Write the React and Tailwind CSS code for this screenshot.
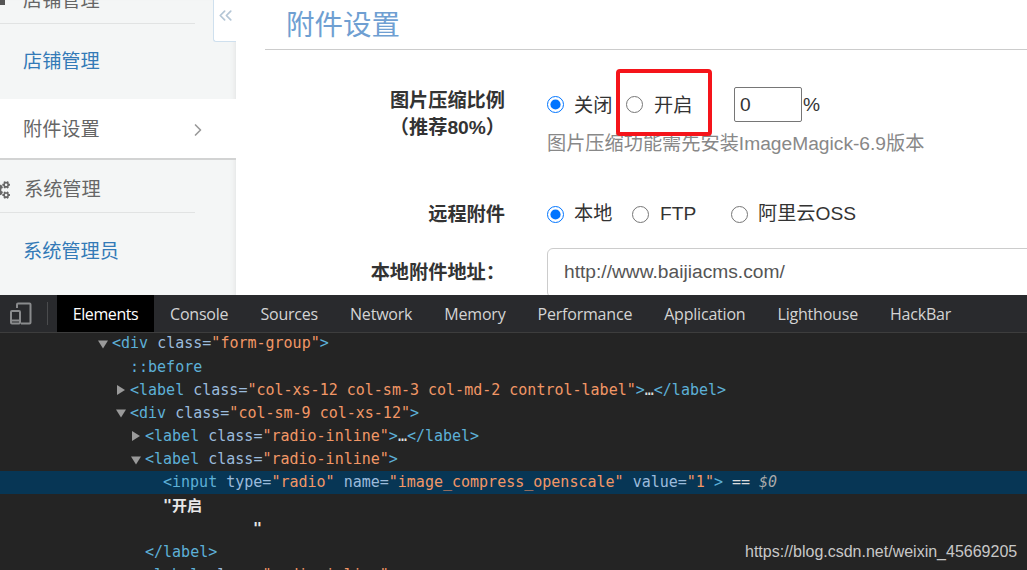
import { ChevronRight, ChevronsLeft } from 'lucide-react';
import { FaCogs } from 'react-icons/fa';

const cjk = { fontFamily: '"Liberation Sans", "Noto Sans CJK SC", sans-serif' };
const tabs = ['Console', 'Sources', 'Network', 'Memory', 'Performance', 'Application', 'Lighthouse', 'HackBar'];

function Radio({ checked, className = '' }) {
  return (
    <input
      type="radio"
      checked={checked}
      readOnly
      className={`m-0 h-[17px] w-[17px] shrink-0 accent-[#0075ff] ${className}`}
    />
  );
}

function Arrow({ open }) {
  return (
    <svg width="10" height="10" viewBox="0 0 10 10" className="shrink-0">
      <path d={open ? 'M0 1.5H10L5 9.5Z' : 'M1 0V10L9 5Z'} fill="#9a9a9a" />
    </svg>
  );
}

function Tag({ name, attrs = [], tail, close }) {
  return (
    <span className="whitespace-pre text-[#5db0d7]">
      {'<'}{close && '/'}{name}
      {attrs.map(([k, v]) => (
        <span key={k}>
          {' '}<span className="text-[#9bbbdc]">{k}</span><span className="text-[#9bbbdc]">=</span>
          <span className="text-[#f29766]">"{v}"</span>
        </span>
      ))}
      {'>'}
      {tail}
    </span>
  );
}

function Line({ indent, arrow, selected, children }) {
  return (
    <div className={`flex h-[23.2px] items-center ${selected ? 'bg-[#073655]' : ''}`}>
      <div className="flex shrink-0 items-center justify-end pr-[4px]" style={{ width: indent }}>
        {arrow && <Arrow open={arrow === 'open'} />}
      </div>
      {children}
    </div>
  );
}

function Sidebar() {
  return (
    <aside className="relative flex h-full w-[236px] shrink-0 flex-col bg-[#f4f6f6] text-[19.2px] shadow-[inset_-5px_0_5px_-4px_#e2e3e3]" style={cjk}>
      <div className="relative flex h-[24px] items-end overflow-hidden pb-[10px] pl-[23px] text-[#666]">
        <span className="leading-[26px]">店铺管理</span>
        <div className="absolute left-0 top-0 h-[5px] w-[5px] bg-[#555]" />
        <div className="absolute bottom-0 left-0 h-px w-[195px] bg-[#e1e3e3]" />
      </div>
      <div className="flex h-[75px] items-center pl-[23px] pt-[2px] text-[#337ab7]">店铺管理</div>
      <div className="flex h-[61px] items-center justify-between border-b-2 border-[#d2d3d3] bg-white pl-[23px] pr-[28px] pt-[3px] text-[#666]">
        附件设置
        <ChevronRight className="h-[20px] w-[20px] text-[#999]" strokeWidth={2} />
      </div>
      <div className="flex h-[53px] w-[195px] items-center gap-[14px] border-b border-[#e1e3e3] pt-[8px] text-[#666]">
        <FaCogs className="-ml-[12px] h-[22px] w-[22px] text-[#666]" />
        系统管理
      </div>
      <div className="flex h-[76px] items-center pl-[23px] pt-[2px] text-[#337ab7]">系统管理员</div>
      <div className="absolute right-0 top-0 flex h-[42px] w-[23px] items-start justify-center rounded-bl-[3px] border-b border-l border-[#cfe0ee] bg-white pt-[5px]">
        <ChevronsLeft className="h-[21px] w-[21px] text-[#b4c6d6]" strokeWidth={2} />
      </div>
    </aside>
  );
}

function Form() {
  return (
    <main className="relative min-w-0 flex-1 overflow-hidden bg-white pl-[29px] text-[19.2px]" style={cjk}>
      <h1 className="h-[50px] border-b border-[#ccc] pl-[21px] text-[28.5px] leading-[50px] text-[#6f9fd2]">附件设置</h1>

      <div className="flex pt-[38px]">
        <div className="w-[240px] shrink-0 text-right font-bold leading-[26.5px] text-[#333]">
          <div>图片压缩比例</div>
          <div>（推荐80%）</div>
        </div>
        <div className="-mt-[1px] min-w-0 flex-1 pl-[42px] leading-[27px] text-[#333]">
          <div className="flex h-[35px] items-center">
            <Radio checked />
            <span className="ml-[10px] w-[52px] pt-[2px]">关闭</span>
            <Radio />
            <span className="ml-[11px] w-[80px] pt-[2px]">开启</span>
            <div className="flex h-[35px] w-[68px] items-center rounded-[2px] border border-[#767676] pl-[5px]">0</div>
            <span className="ml-px">%</span>
          </div>
          <div className="mt-[8px] text-[#888]">图片压缩功能需先安装ImageMagick-6.9版本</div>
        </div>
      </div>

      <div className="flex pt-[44px]">
        <div className="w-[240px] shrink-0 text-right font-bold leading-[27px] text-[#333]">远程附件</div>
        <div className="flex h-[27px] items-center pl-[42px] text-[#333]">
          <Radio checked />
          <span className="ml-[10px] w-[58px]">本地</span>
          <Radio />
          <span className="ml-[11px] w-[71px]">FTP</span>
          <Radio />
          <span className="ml-[10px]">阿里云OSS</span>
        </div>
      </div>

      <div className="flex pt-[20px]">
        <div className="w-[240px] shrink-0 pt-[11px] text-right font-bold leading-[27px] text-[#333]">本地附件地址：</div>
        <div className="ml-[42px] flex h-[50px] w-[600px] shrink-0 items-center rounded-[6px] border border-[#ccc] pb-[2px] pl-[16px] text-[#555]">
          http://www.baijiacms.com/
        </div>
      </div>
    </main>
  );
}

function DevTools() {
  return (
    <section className="flex min-h-0 flex-1 flex-col overflow-hidden bg-[#242424]">
      <div className="flex h-[38px] shrink-0 items-stretch border-b border-[#3d3d3d] bg-[#292a2d] text-[16px] text-[#d4d4d4]" style={{ fontFamily: '"Open Sans", sans-serif' }}>
        <div className="flex w-[47px] items-center pl-[9px]">
          <svg width="23" height="23" viewBox="0 0 23 23" fill="none" stroke="#8a8b8d" strokeWidth="2">
            <path d="M8 6V2.5a1 1 0 0 1 1-1h11.5a1 1 0 0 1 1 1v18a1 1 0 0 1-1 1H12" />
            <rect x="2" y="9" width="9" height="12.5" rx="1" />
            <path d="M2 18.5h9" />
          </svg>
        </div>
        <div className="my-[7px] w-px bg-[#4a4b4d]" />
        <div className="ml-[9px] flex w-[97px] items-center justify-center bg-black tracking-[-0.4px] text-white">Elements</div>
        <div className="flex items-center">
          {tabs.map((t) => (
            <span key={t} className="px-[16px] tracking-[-0.2px]">{t}</span>
          ))}
        </div>
      </div>
      <div className="relative -mt-[1px] flex-1 text-[15px]" style={{ fontFamily: '"DejaVu Sans Mono", "Noto Sans CJK SC", monospace' }}>
        <Line indent={112} arrow="open"><Tag name="div" attrs={[['class', 'form-group']]} /></Line>
        <Line indent={130}><span className="text-[#5db0d7]">::before</span></Line>
        <Line indent={130} arrow="closed">
          <Tag name="label" attrs={[['class', 'col-xs-12 col-sm-3 col-md-2 control-label']]} tail={<><span className="text-[#ddd]">…</span>{'</label>'}</>} />
        </Line>
        <Line indent={130} arrow="open"><Tag name="div" attrs={[['class', 'col-sm-9 col-xs-12']]} /></Line>
        <Line indent={145} arrow="closed">
          <Tag name="label" attrs={[['class', 'radio-inline']]} tail={<><span className="text-[#ddd]">…</span>{'</label>'}</>} />
        </Line>
        <Line indent={145} arrow="open"><Tag name="label" attrs={[['class', 'radio-inline']]} /></Line>
        <Line indent={163} selected>
          <Tag name="input" attrs={[['type', 'radio'], ['name', 'image_compress_openscale'], ['value', '1']]} />
          <span className="whitespace-pre text-[#ddd]"> == <i className="text-[#aaa]">$0</i></span>
        </Line>
        <Line indent={163}><span className="font-bold text-[#e8e8e8]">"开启</span></Line>
        <Line indent={253}><span className="font-bold text-[#e8e8e8]">"</span></Line>
        <Line indent={145}><Tag close name="label" /></Line>
        <Line indent={145} arrow="closed">
          <Tag name="label" attrs={[['class', 'radio-inline']]} />
        </Line>
      </div>
    </section>
  );
}

export default function App() {
  return (
    <div className="relative flex h-[570px] w-[1027px] flex-col overflow-hidden bg-white">
      <div className="flex h-[295px] shrink-0 overflow-hidden">
        <Sidebar />
        <Form />
      </div>
      <DevTools />
      {/* annotation drawn over the screenshot */}
      <div className="absolute left-[616px] top-[69px] h-[67px] w-[96px] rounded-[4px] border-[4px] border-[#f5141a]" />
      <div className="absolute left-[745px] top-[540px] text-[16px] text-[#c8c8c8]" style={cjk}>https://blog.csdn.net/weixin_45669205</div>
    </div>
  );
}
